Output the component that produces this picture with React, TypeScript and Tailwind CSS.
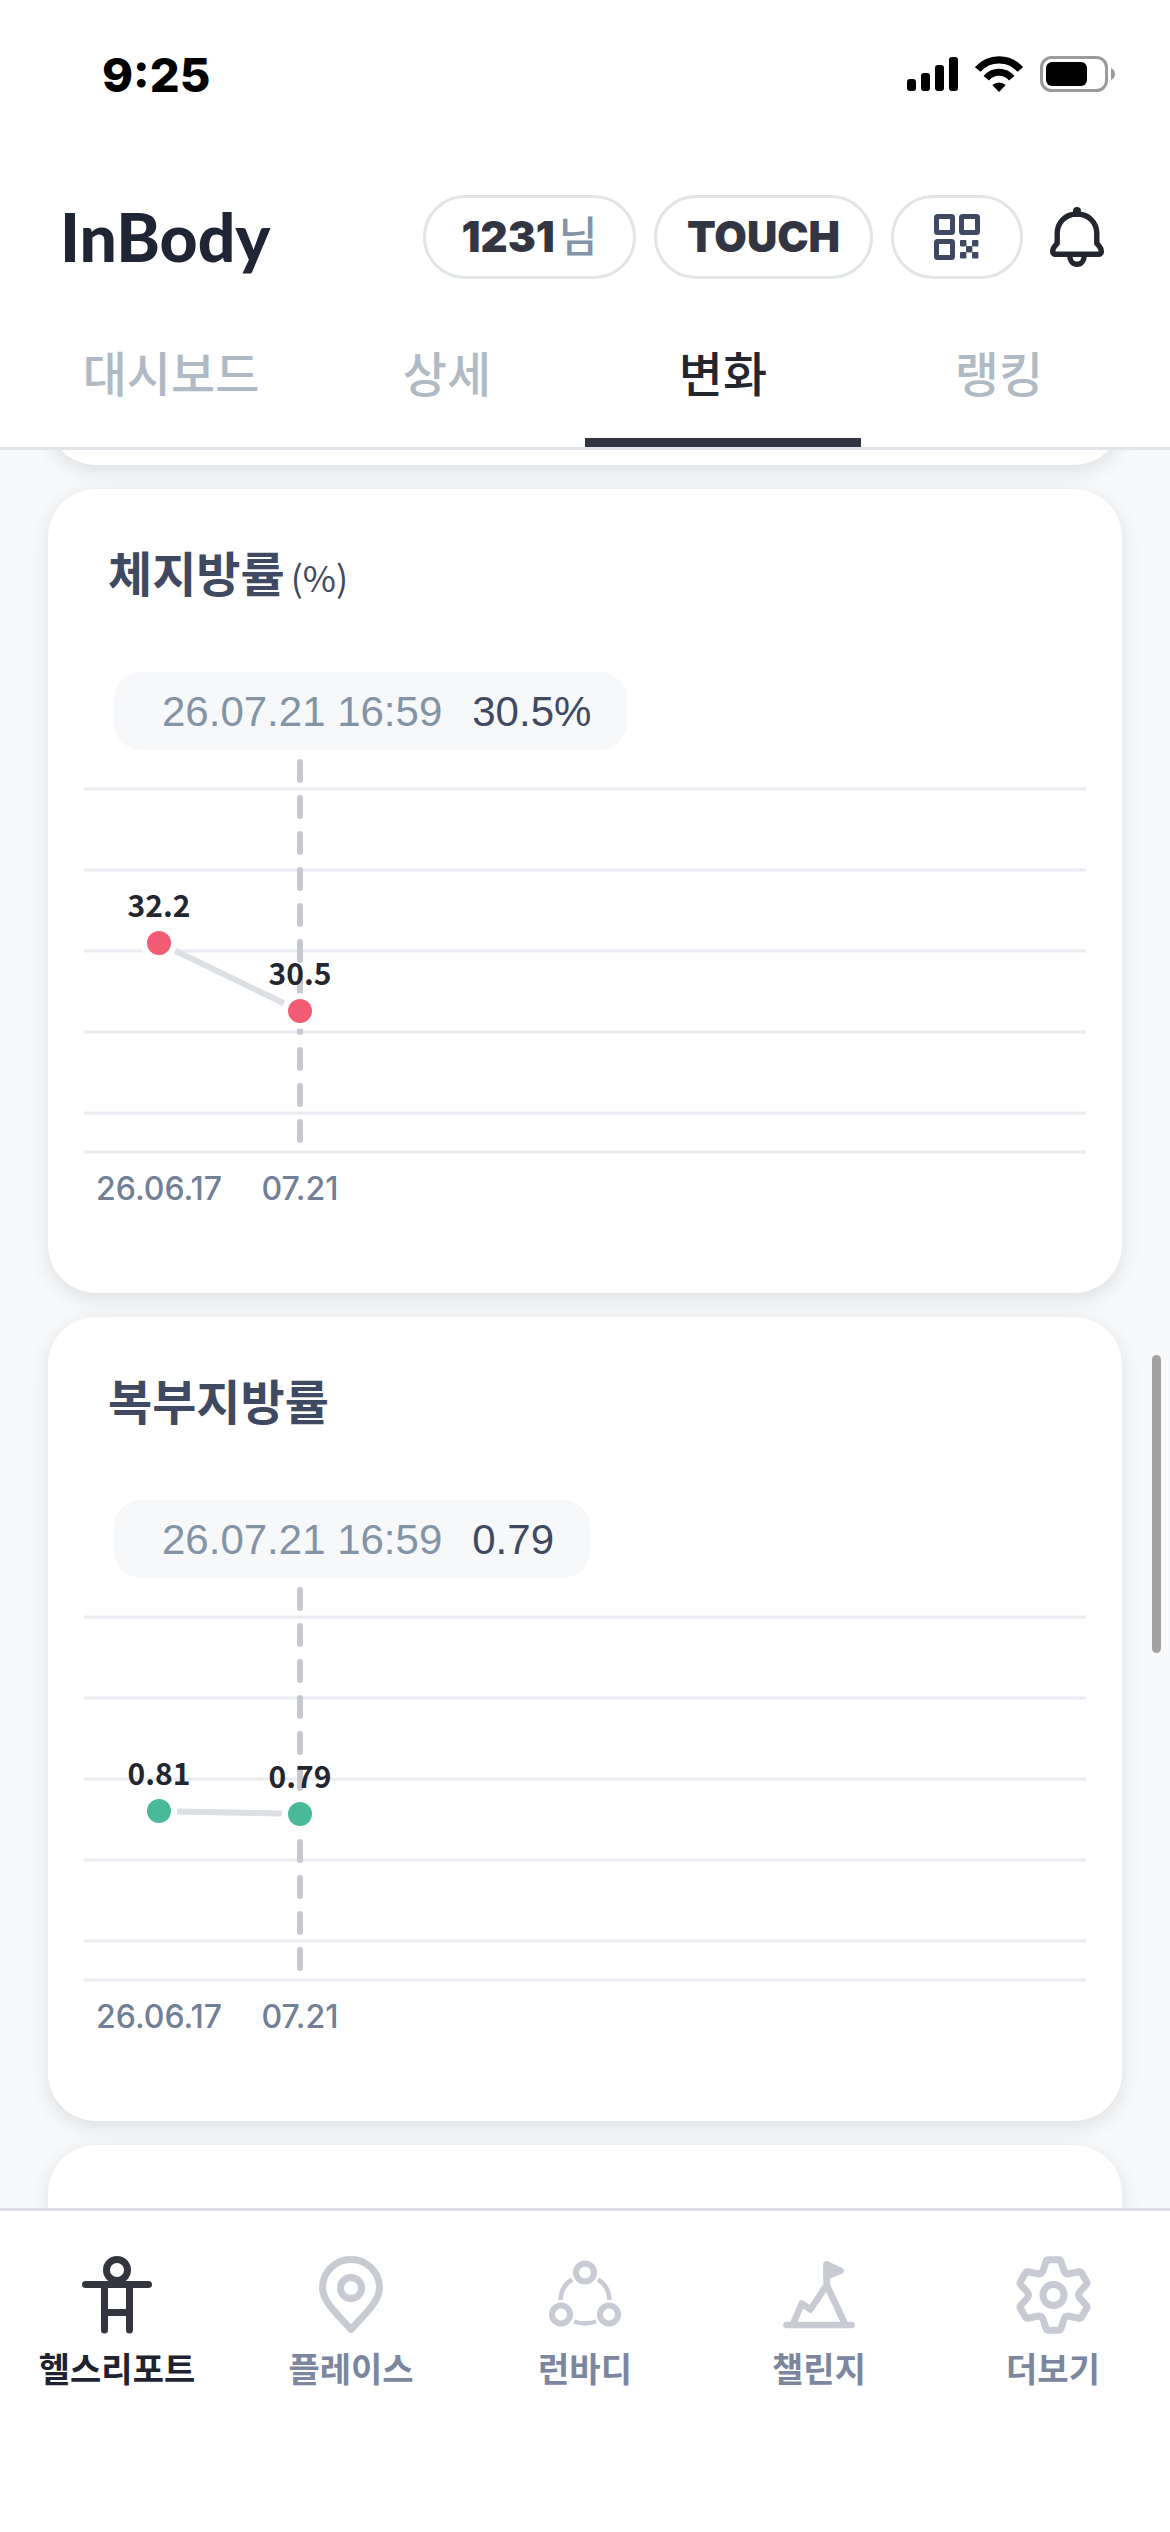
import type { ReactNode } from 'react';
import { useState } from 'react';

type Point = { label: string; text: string; y: number };

type Metric = {
  title: string;
  unit?: string;
  measuredAt: string;
  current: string;
  color: string;
  points: Point[];
};

const metrics: Metric[] = [
  {
    title: '체지방률',
    unit: '(%)',
    measuredAt: '26.07.21 16:59',
    current: '30.5%',
    color: '#f25c75',
    points: [
      { label: '26.06.17', text: '32.2', y: 193 },
      { label: '07.21', text: '30.5', y: 261 },
    ],
  },
  {
    title: '복부지방률',
    measuredAt: '26.07.21 16:59',
    current: '0.79',
    color: '#48b999',
    points: [
      { label: '26.06.17', text: '0.81', y: 233 },
      { label: '07.21', text: '0.79', y: 236 },
    ],
  },
];

const tabs = ['대시보드', '상세', '변화', '랭킹'];

const gridLines = [39, 120, 201, 282, 363, 402];
const firstX = 75;
const stepX = 141;
const ring = 18;

export default function App() {
  const [tab, setTab] = useState('변화');
  const [menu, setMenu] = useState('헬스리포트');

  return (
    <div className="flex h-screen flex-col overflow-hidden bg-white font-['Noto_Sans_CJK_KR',sans-serif]">
      <header className="shrink-0 border-b-[3px] border-[#e1e4e8]">
        <StatusBar />
        <div className="flex h-[178px] items-center justify-between pr-[66px] pl-[60px]">
          <a href="#home" className="font-['Lato',sans-serif] text-[66px] leading-none font-black text-[#202535]">InBody</a>
          <div className="flex items-center gap-[18px]">
            <Pill className="w-[213px]">1231<span className="pl-1 font-medium text-[#8494a7]">님</span></Pill>
            <Pill className="w-[219px]">TOUCH</Pill>
            <Pill className="w-[132px]" label="QR"><QrIcon /></Pill>
            <button aria-label="알림" className="ml-[9px]"><BellIcon /></button>
          </div>
        </div>
        <nav className="grid grid-cols-4 px-[33px]">
          {tabs.map((name) => (
            <button key={name} onClick={() => setTab(name)} className={`flex h-[121px] flex-col text-[48px] font-medium ${tab === name ? 'text-[#23262f]' : 'text-[#b0bac5]'}`}>
              <span className="w-full leading-[90px]">{name}</span>
              {tab === name && <span className="mt-auto h-[9px] w-full bg-[#333642]" />}
            </button>
          ))}
        </nav>
      </header>

      <main className="relative flex min-h-0 flex-1 flex-col gap-6 overflow-hidden bg-[#f8f9fb] px-12">
        <Card className="-mt-[90px] h-[105px] shrink-0" />
        {metrics.map((metric) => <MetricCard key={metric.title} metric={metric} />)}
        <Card className="-mb-24 flex-1" />
        <div className="absolute top-[905px] right-[9px] h-[298px] w-[9px] rounded-full bg-[#a1a1a2]" />
      </main>

      <nav className="grid h-[324px] shrink-0 grid-cols-5 border-t-[3px] border-[#dcdfe4] pt-[45px]">
        {menuItems.map(({ name, icon }) => (
          <button key={name} onClick={() => setMenu(name)} className="flex flex-col items-center gap-[9px] self-start">
            <span className={menu === name ? 'text-[#33363f]' : 'text-[#c8cad4]'}>{icon}</span>
            <span className={`text-[34px] leading-[50px] font-bold ${menu === name ? 'text-[#1f2330]' : 'text-[#7c879f]'}`}>{name}</span>
          </button>
        ))}
      </nav>
    </div>
  );
}

function StatusBar() {
  return (
    <div className="flex h-[148px] items-center justify-between pr-[54px] pl-[102px]">
      <span className="font-['Inter',sans-serif] text-[47px] leading-none font-extrabold text-black">9:25</span>
      <div className="flex items-center gap-[17px]">
        <svg width="51" height="36" viewBox="0 0 51 36" aria-hidden="true">
          <rect x="0" y="23" width="9" height="12" rx="3" />
          <rect x="14" y="17" width="9" height="18" rx="3" />
          <rect x="28" y="9" width="9" height="26" rx="3" />
          <rect x="42" y="1" width="9" height="34" rx="3" />
        </svg>
        <svg width="48" height="36" viewBox="0 0 48 36" aria-hidden="true">
          <path d="M2.7 13.5A28.2 28.2 0 0 1 45.3 13.5M11.3 22.2A16.5 16.5 0 0 1 36.7 22.2" fill="none" stroke="#000" strokeWidth="7.2" />
          <path d="M24 36 17.3 29A10 10 0 0 1 30.7 29z" />
        </svg>
        <svg width="76" height="36" viewBox="0 0 76 36" aria-hidden="true">
          <rect x="1.5" y="1.5" width="65" height="33" rx="10" fill="none" stroke="#9a9a9a" strokeWidth="3" />
          <rect x="6" y="6" width="41" height="24" rx="6" />
          <path d="M71 12q4 2 4 6t-4 6z" fill="#9a9a9a" />
        </svg>
      </div>
    </div>
  );
}

function Pill({ children, className, label }: { children: ReactNode; className: string; label?: string }) {
  return (
    <button aria-label={label} className={`flex h-[84px] items-center justify-center rounded-full border-[3px] border-[#e1e5e8] font-['Inter','Noto_Sans_CJK_KR',sans-serif] text-[42px] leading-none font-black text-[#333642] ${className}`}>
      {children}
    </button>
  );
}

function Card({ children, className = '' }: { children?: ReactNode; className?: string }) {
  return <section className={`rounded-[48px] bg-white shadow-[0_6px_21px_rgba(0,0,0,0.11)] ${className}`}>{children}</section>;
}

function MetricCard({ metric }: { metric: Metric }) {
  return (
    <Card className="shrink-0 px-9 pt-[46px] pb-[63px]">
      <h2 className="pl-6 text-[48px] leading-[72px] font-bold text-[#3f4a62]">
        {metric.title}
        {metric.unit && <span className="pl-1.5 text-[36px] leading-none font-normal">{metric.unit}</span>}
      </h2>
      <div className="mt-[65px] ml-[30px] flex h-[78px] w-fit items-center gap-[30px] rounded-[27px] bg-[#f7f8fa] pr-9 pl-12 font-['Liberation_Sans',sans-serif] text-[42px]">
        <time className="text-[#8494a7]">{metric.measuredAt}</time>
        <span className="text-[#3f4a62]">{metric.current}</span>
      </div>
      <TrendChart points={metric.points} color={metric.color} />
    </Card>
  );
}

function TrendChart({ points, color }: { points: Point[]; color: string }) {
  const xAt = (i: number) => firstX + i * stepX;
  const lastX = xAt(points.length - 1);
  return (
    <svg className="block h-[480px] w-full" role="img">
      {gridLines.map((y) => <line key={y} x1="0" x2="100%" y1={y} y2={y} stroke="#ebecf1" strokeWidth="3" />)}
      <line x1={lastX} x2={lastX} y1="12" y2="391" stroke="#c6c9d1" strokeWidth="6" strokeLinecap="round" strokeDasharray="18 18" />
      {points.map((point, i) => <circle key={point.label} cx={xAt(i)} cy={point.y} r={ring} fill="#fff" />)}
      {points.slice(1).map((point, i) => {
        // stop the segment at the edge of both rings
        const prev = points[i];
        const length = Math.hypot(stepX, point.y - prev.y);
        const dx = (stepX * ring) / length;
        const dy = ((point.y - prev.y) * ring) / length;
        return <line key={point.label} x1={xAt(i) + dx} y1={prev.y + dy} x2={xAt(i + 1) - dx} y2={point.y - dy} stroke="#dcdfe4" strokeWidth="6" />;
      })}
      {points.map((point, i) => (
        <g key={point.label} textAnchor="middle">
          <circle cx={xAt(i)} cy={point.y} r="12" fill={color} />
          <text x={xAt(i)} y={point.y - 26} className="fill-[#23262f] text-[30px] font-bold">{point.text}</text>
          <text x={xAt(i)} y="450" className="fill-[#718096] font-['Inter',sans-serif] text-[32px] font-medium">{point.label}</text>
        </g>
      ))}
    </svg>
  );
}

function QrIcon() {
  return (
    <svg width="46" height="46" viewBox="0 0 46 46" fill="none" stroke="#3f4a62" strokeWidth="5">
      <rect x="2.5" y="2.5" width="16" height="16" rx="1" />
      <rect x="27.5" y="2.5" width="16" height="16" rx="1" />
      <rect x="2.5" y="27.5" width="16" height="16" rx="1" />
      <g fill="#3f4a62" stroke="none">
        <rect x="26" y="26" width="6.4" height="6.4" rx="1" />
        <rect x="38" y="26" width="6.4" height="6.4" rx="1" />
        <rect x="32" y="32" width="6.4" height="6.4" rx="1" />
        <rect x="26" y="38" width="6.4" height="6.4" rx="1" />
        <rect x="38" y="38" width="6.4" height="6.4" rx="1" />
      </g>
    </svg>
  );
}

function BellIcon() {
  return (
    <svg width="54" height="60" viewBox="0 0 54 60" fill="none" stroke="#23262f" strokeWidth="5.4" strokeLinejoin="round">
      <path d="M27 7C15.5 7 7.2 15.5 7.2 26.5V36.5C4 39.5 2.7 41.5 2.7 44.5C2.7 46.2 3.8 47.3 5.5 47.3H48.5C50.2 47.3 51.3 46.2 51.3 44.5C51.3 41.5 50 39.5 46.8 36.5V26.5C46.8 15.5 38.5 7 27 7z" />
      <path d="M19.8 49C19.8 54 23 57.3 27 57.3S34.2 54 34.2 49" />
      <path d="M27 4V6" strokeWidth="8" strokeLinecap="round" />
    </svg>
  );
}

function MenuIcon({ width, children }: { width: number; children: ReactNode }) {
  return (
    <svg width={width} height="78" viewBox={`0 0 ${width} 78`} fill="none" stroke="currentColor" strokeWidth="7" strokeLinecap="round" strokeLinejoin="round">
      {children}
    </svg>
  );
}

// six teeth around (37.5, 39), with softened valleys between them
function gearPath() {
  const at = (deg: number, r: number) => {
    const a = (deg * Math.PI) / 180;
    return [37.5 + r * Math.sin(a), 39 - r * Math.cos(a)];
  };
  const mix = (p: number[], q: number[], t: number) => [p[0] + (q[0] - p[0]) * t, p[1] + (q[1] - p[1]) * t];
  const parts: string[] = [];
  for (let i = 0; i < 6; i++) {
    const left = at(i * 60 - 11, 36);
    const right = at(i * 60 + 11, 36);
    const valley = at(i * 60 + 30, 23.5);
    const next = at(i * 60 + 49, 36);
    const tooth = [mix(left, at(i * 60 - 30, 23.5), 0.12), left, mix(left, right, 0.15), mix(right, left, 0.15), right, mix(right, valley, 0.12)];
    parts.push(`${i ? 'L' : 'M'}${tooth[0]}Q${tooth[1]} ${tooth[2]}L${tooth[3]}Q${tooth[4]} ${tooth[5]}`);
    parts.push(`L${mix(valley, right, 0.3)}Q${valley} ${mix(valley, next, 0.3)}`);
  }
  return `${parts.join('')}Z`;
}

const menuItems = [
  {
    name: '헬스리포트',
    icon: (
      <MenuIcon width={70}>
        <circle cx="35" cy="14" r="10.5" />
        <path d="M3.5 28.5H66.5M22.5 28.5V74M47.5 28.5V74M22.5 56.5H47.5" />
      </MenuIcon>
    ),
  },
  {
    name: '플레이스',
    icon: (
      <MenuIcon width={64}>
        <path d="M32 73.5C20 60 3.5 46 3.5 31.5A28.5 28 0 0 1 60.5 31.5C60.5 46 44 60 32 73.5z" />
        <circle cx="32" cy="32" r="10.5" />
      </MenuIcon>
    ),
  },
  {
    name: '런바디',
    icon: (
      <MenuIcon width={72}>
        <g strokeWidth="6">
          <circle cx="36" cy="16.5" r="9" />
          <circle cx="12" cy="58.5" r="9" />
          <circle cx="60" cy="58.5" r="9" />
        </g>
        <path d="M49 23.5A25 25 0 0 1 60.5 44M23 23.5A25 25 0 0 0 11.5 44M25 65.5Q36 69.5 47 65.5" strokeWidth="4.5" strokeLinecap="butt" />
      </MenuIcon>
    ),
  },
  {
    name: '챌린지',
    icon: (
      <MenuIcon width={72}>
        <path d="M3.5 69H68.5M10 68 18.8 47.5 27.5 53.5 43.7 29 62 68M43.7 29V8.5" strokeWidth="6.6" />
        <path d="M43.7 8.5 57.5 14.8 43.7 20.5z" fill="currentColor" strokeWidth="6.6" />
      </MenuIcon>
    ),
  },
  {
    name: '더보기',
    icon: (
      <MenuIcon width={75}>
        <path d={gearPath()} />
        <circle cx="37.5" cy="39" r="10.5" />
      </MenuIcon>
    ),
  },
];
